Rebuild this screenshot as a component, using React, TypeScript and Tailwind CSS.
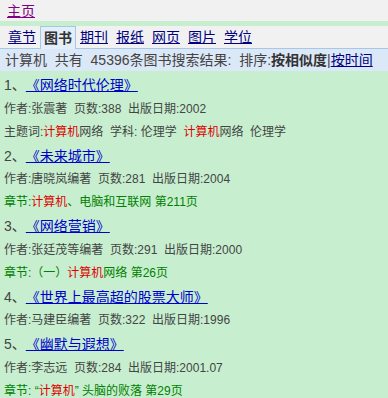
import React from "react";

const font = { fontFamily: '"Liberation Sans", "Noto Sans CJK SC", sans-serif' };

const R = ({ children }: { children: React.ReactNode }) => <span className="text-[#e00000]">{children}</span>;

type Item = { n: number; title: string; author: React.ReactNode; extra?: React.ReactNode };

const items: Item[] = [
  {
    n: 1,
    title: "《网络时代伦理》",
    author: <>作者:张震著&nbsp;&nbsp;页数:388&nbsp;&nbsp;出版日期:2002</>,
    extra: (
      <span className="text-[#444]">
        主题词:<R>计算机</R>网络&nbsp;&nbsp;学科: 伦理学&nbsp;&nbsp;<R>计算机</R>网络&nbsp;&nbsp;伦理学
      </span>
    ),
  },
  {
    n: 2,
    title: "《未来城市》",
    author: <>作者:唐晓岚编著&nbsp;&nbsp;页数:281&nbsp;&nbsp;出版日期:2004</>,
    extra: (
      <span className="text-[#008000]">
        章节:<R>计算机</R>、电脑和互联网 第211页
      </span>
    ),
  },
  {
    n: 3,
    title: "《网络营销》",
    author: <>作者:张廷茂等编著&nbsp;&nbsp;页数:291&nbsp;&nbsp;出版日期:2000</>,
    extra: (
      <span className="text-[#008000]">
        章节:（一）<R>计算机</R>网络 第26页
      </span>
    ),
  },
  {
    n: 4,
    title: "《世界上最高超的股票大师》",
    author: <>作者:马建臣编著&nbsp;&nbsp;页数:322&nbsp;&nbsp;出版日期:1996</>,
  },
  {
    n: 5,
    title: "《幽默与遐想》",
    author: <>作者:李志远&nbsp;&nbsp;页数:284&nbsp;&nbsp;出版日期:2001.07</>,
    extra: (
      <span className="text-[#008000]">
        章节: “<R>计算机</R>” 头脑的败落 第29页
      </span>
    ),
  },
];

export default function App() {
  const tabs = ["章节", "图书", "期刊", "报纸", "网页", "图片", "学位"];
  return (
    <div className="w-[388px] h-[398px] overflow-hidden bg-[#c7efcf]" style={font}>
      <div className="h-[21px] bg-[#f1f1f1] pl-[7px] flex items-center">
        <a className="text-[14px] leading-none text-[#800080] underline">主页</a>
      </div>
      <div className="h-[5px] bg-[#c7efcf]" />
      <div className="h-[22px] bg-[#f1f1f1] flex items-end pl-[4px] relative z-10">
        {tabs.map((t, i) =>
          i === 1 ? (
            <span
              key={t}
              className="h-[23px] -mb-px px-[3px] border border-b-0 border-[#a6c8e6] bg-[#e4eef9] text-[14px] font-bold text-[#333] flex items-center"
            >
              {t}
            </span>
          ) : (
            <a key={t} className="h-[22px] px-[4px] text-[14px] text-[#000080] underline flex items-center">
              {t}
            </a>
          )
        )}
      </div>
      <div className="h-[23px] bg-[#dbe8f7] border-t border-[#a6c8e6] pl-[5px] flex items-center text-[14px] text-[#444] whitespace-nowrap">
        计算机&nbsp;&nbsp;共有&nbsp;&nbsp;45396条图书搜索结果:&nbsp;&nbsp;排序:<b className="text-[#333]">按相似度</b>|
        <a className="text-[#000080] underline">按时间</a>
      </div>
      <div className="pt-[3px] pl-[4px]">
        {items.map((it) => (
          <div key={it.n} className="mb-[1.5px]">
            <div className="h-[23px] flex items-center text-[14px] text-[#444] whitespace-nowrap">
              <span>{it.n}、</span>
              <a className="text-[#0000cc] underline">{it.title}</a>
            </div>
            <div className="h-[23px] flex items-center text-[12px] text-[#444] whitespace-nowrap">{it.author}</div>
            {it.extra && <div className="h-[23px] flex items-center text-[12px] whitespace-nowrap">{it.extra}</div>}
          </div>
        ))}
      </div>
    </div>
  );
}
